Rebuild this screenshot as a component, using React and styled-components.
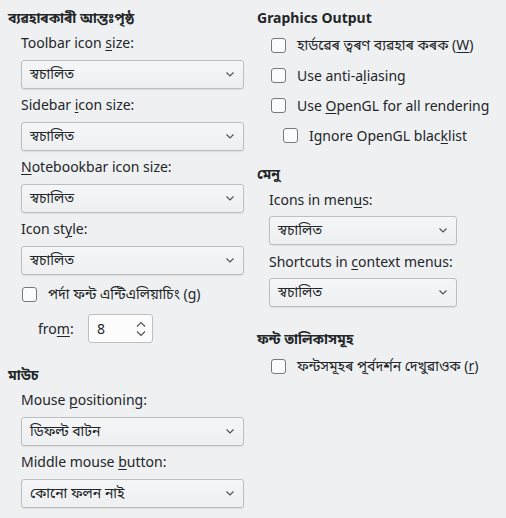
import React from 'react';
import styled, { createGlobalStyle } from 'styled-components';

const GlobalStyle = createGlobalStyle`
    html, body {
        margin: 0;
        padding: 0;
        background: #eff0f1;
    }
    body {
        font-family: "Noto Sans", "Noto Sans Bengali", "Lohit Assamese", "FreeSans", sans-serif;
        color: #232629;
        font-size: 14px;
    }
    u {
        text-decoration-thickness: 1px;
        text-underline-offset: 2px;
    }
`

const Page = styled.div`
    width: 506px;
    height: 518px;
    display: flex;
    gap: 13px;
    padding: 9px 0 0 8px;
    box-sizing: border-box;
    background: #eff0f1;
    overflow: hidden;
`

const Column = styled.div`
    display: flex;
    flex-direction: column;
    width: ${p => p.width}px;
`

const Heading = styled.div`
    font-weight: 700;
    line-height: 18px;
    height: 18px;
    margin-top: ${p => p.top || 0}px;
    white-space: nowrap;
`

const Label = styled.div`
    line-height: 20px;
    height: 20px;
    padding-left: ${p => p.indent || 13}px;
    margin-top: ${p => p.top || 6}px;
    white-space: nowrap;
`

const Combo = styled.div`
    display: flex;
    align-items: center;
    justify-content: space-between;
    box-sizing: border-box;
    height: 29px;
    width: ${p => p.width}px;
    margin-left: ${p => p.indent || 13}px;
    margin-top: ${p => p.top || 7}px;
    padding: 0 9px 0 8px;
    border: 1px solid #bcbebf;
    border-radius: 3px;
    background: linear-gradient(#f5f6f7, #eeeff0);
    box-shadow: 0 1px 1px rgba(0, 0, 0, 0.08);
    white-space: nowrap;
`

const CheckRow = styled.div`
    display: flex;
    align-items: center;
    height: 20px;
    margin-top: ${p => p.top || 10}px;
    padding-left: ${p => p.indent || 14}px;
    white-space: nowrap;
`

const Box = styled.div`
    width: 15px;
    height: 15px;
    box-sizing: border-box;
    border: 1px solid #76797c;
    border-radius: 3px;
    background: #fcfcfc;
    margin-right: 11px;
    flex: none;
`

const SpinRow = styled.div`
    display: flex;
    align-items: center;
    margin-top: 10px;
    padding-left: 30px;
`

const SpinLabel = styled.span`
    width: 50px;
`

const Spin = styled.div`
    display: flex;
    align-items: center;
    justify-content: space-between;
    box-sizing: border-box;
    width: 65px;
    height: 29px;
    padding: 0 6px 0 8px;
    border: 1px solid #bcbebf;
    border-radius: 3px;
    background: #fcfcfc;
`

const Chevron = () => (
    <svg width="8" height="5" viewBox="0 0 8 5">
        <path d="M0.5 0.5 L4 4 L7.5 0.5" fill="none" stroke="#4d5053" strokeWidth="1.1" />
    </svg>
)

const SpinArrows = () => (
    <svg width="10" height="16" viewBox="0 0 10 16">
        <path d="M1 5.5 L5 1.5 L9 5.5" fill="none" stroke="#4d5053" strokeWidth="1.1" />
        <path d="M1 10.5 L5 14.5 L9 10.5" fill="none" stroke="#4d5053" strokeWidth="1.1" />
    </svg>
)

const Select = ({ value, width, indent, top }) => (
    <Combo width={width} indent={indent} top={top}>
        <span>{value}</span>
        <Chevron />
    </Combo>
)

const Check = ({ children, indent, top }) => (
    <CheckRow indent={indent} top={top}>
        <Box />
        <span>{children}</span>
    </CheckRow>
)

const AUTO = 'স্বচালিত';

export default function App() {
    return (
        <>
            <GlobalStyle />
            <Page>
                <Column width={236}>
                    <Heading>ব্যৱহাৰকাৰী আন্তঃপৃষ্ঠ</Heading>
                    <Label>Toolbar icon <u>s</u>ize:</Label>
                    <Select value={AUTO} width={223} />
                    <Label>Sidebar <u>i</u>con size:</Label>
                    <Select value={AUTO} width={223} />
                    <Label><u>N</u>otebookbar icon size:</Label>
                    <Select value={AUTO} width={223} />
                    <Label>Icon st<u>y</u>le:</Label>
                    <Select value={AUTO} width={223} />
                    <Check top={9}>পৰ্দা ফন্ট এন্টিএলিয়াচিং (<u>g</u>)</Check>
                    <SpinRow>
                        <SpinLabel>fro<u>m</u>:</SpinLabel>
                        <Spin>
                            <span>8</span>
                            <SpinArrows />
                        </Spin>
                    </SpinRow>
                    <Heading top={23}>মাউচ</Heading>
                    <Label>Mouse <u>p</u>ositioning:</Label>
                    <Select value="ডিফল্ট বাটন" width={223} />
                    <Label>Middle mouse <u>b</u>utton:</Label>
                    <Select value="কোনো ফলন নাই" width={223} />
                </Column>
                <Column width={240}>
                    <Heading>Graphics Output</Heading>
                    <Check top={8}>হাৰ্ডৱেৰ ত্বৰণ ব্যৱহাৰ কৰক (<u>W</u>)</Check>
                    <Check>Use anti-a<u>l</u>iasing</Check>
                    <Check>Use <u>O</u>penGL for all rendering</Check>
                    <Check indent={26}>Ignore OpenGL blac<u>k</u>list</Check>
                    <Heading top={20}>মেনু</Heading>
                    <Label indent={12} top={7}>Icons in men<u>u</u>s:</Label>
                    <Select value={AUTO} width={188} indent={12} top={6} />
                    <Label indent={12} top={7}>Shortcuts in <u>c</u>ontext menus:</Label>
                    <Select value={AUTO} width={188} indent={12} top={6} />
                    <Heading top={23}>ফন্ট তালিকাসমূহ</Heading>
                    <Check top={8}>ফন্টসমূহৰ পূৰ্বদৰ্শন দেখুৱাওক (<u>r</u>)</Check>
                </Column>
            </Page>
        </>
    );
}
